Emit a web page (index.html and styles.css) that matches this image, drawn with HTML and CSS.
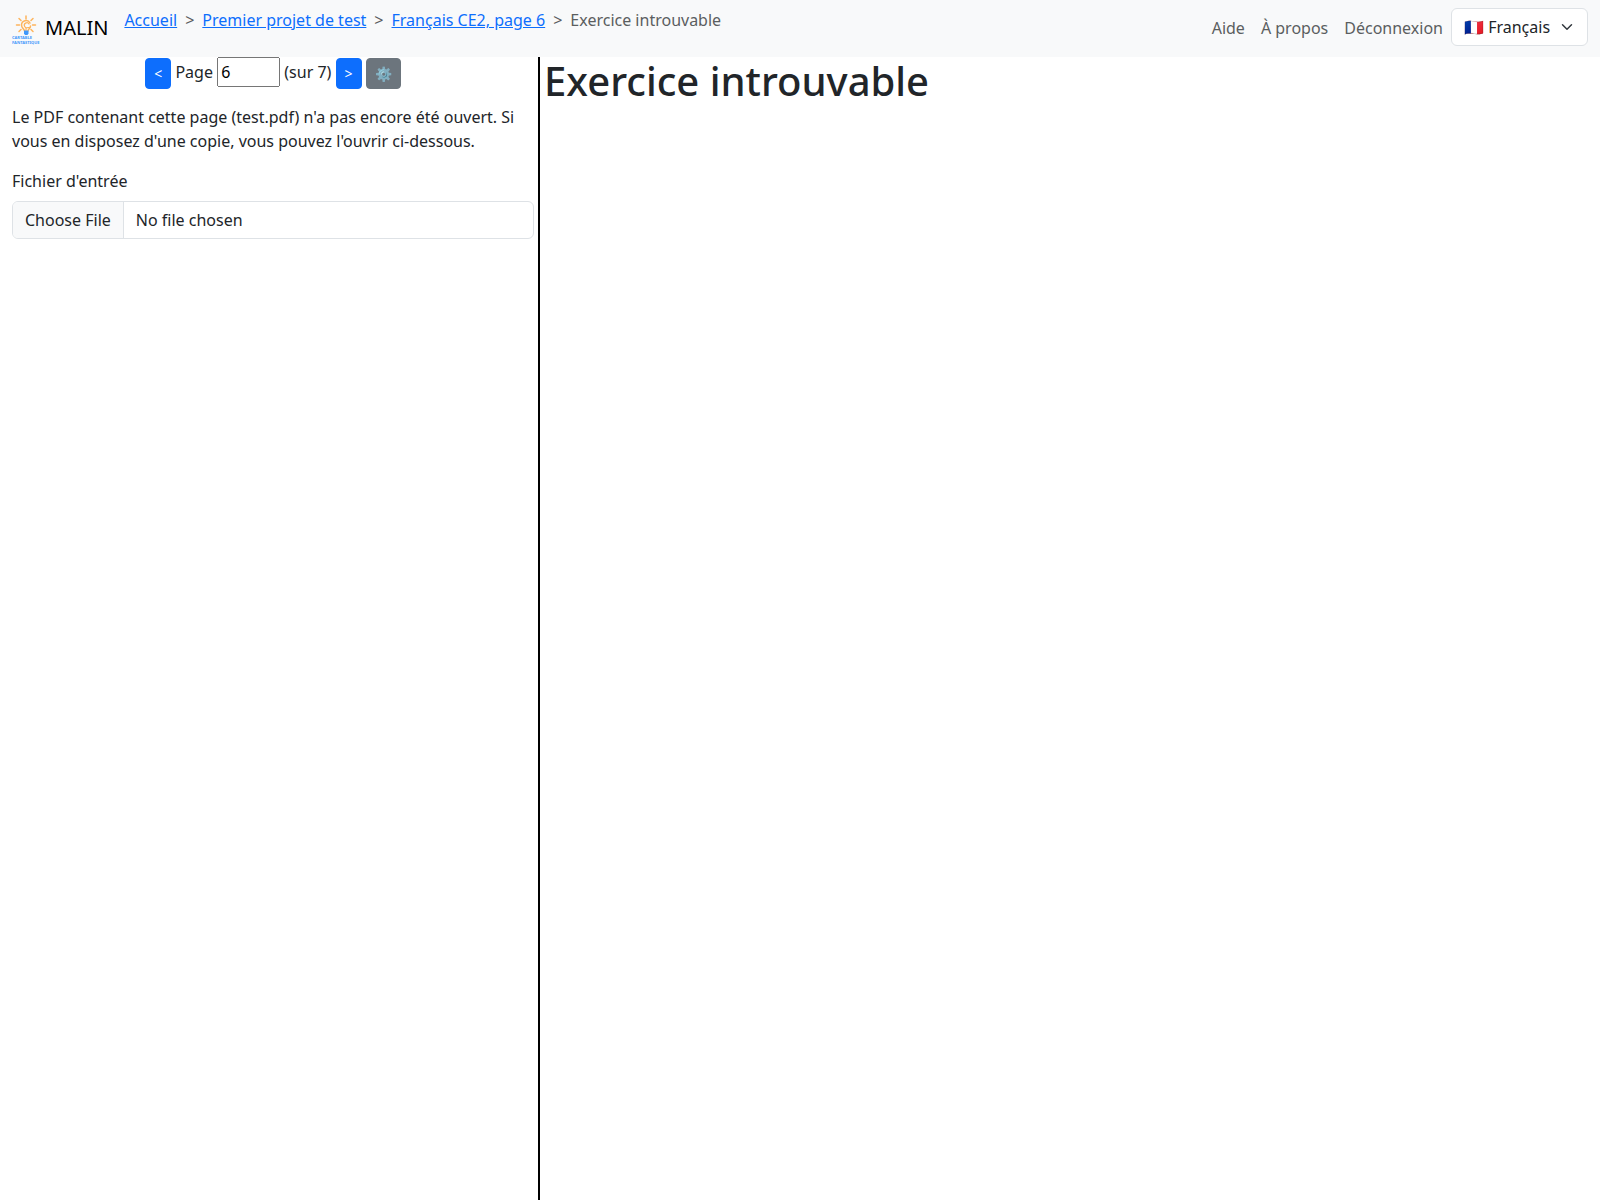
FILE: index.html
```html
<!DOCTYPE html>
<html lang="fr">
<head>
  <meta charset="utf-8">
  <meta name="viewport" content="width=device-width, initial-scale=1">
  <title>MALIN - Exercice introuvable</title>
  <link rel="stylesheet" href="styles.css">
</head>
<body>
  <header class="navbar">
    <a class="brand" href="#">
      <svg class="logo" viewBox="0 0 30 30" aria-hidden="true">
        <g fill="none" stroke="#fdb45c" stroke-width="1.500" stroke-linecap="round">
          <path d="M14 1v3M7 3.500l2 2M21 3.500l-2 2M4.500 10h3M20.500 10h3M7 16.500l2-2M21 16.500l-2-2"/>
          <path d="M12.500 16c0-2-3-2.500-3-6a4.500 4.500 0 0 1 8.500-2M18.500 11c0 2.500-2.500 3-2.500 5" stroke-width="1.500"/>
          <path d="M17 9a2.500 2.500 0 1 0-1 3.500h2M14 13v3" stroke-width="1.200"/>
        </g>
        <path d="M12 15.500h4.500v3l-1 1.500h-2.500l-1-1.500z" fill="#3f98fb"/>
        <g class="logo-text">
          <text x="0" y="24">CARTABLE</text>
          <text x="0" y="29">FANTASTIQUE</text>
        </g>
      </svg>
      <span>MALIN</span>
    </a>
    <nav class="trail" aria-label="Fil d'Ariane">
      <ol class="breadcrumb">
        <li><a href="#">Accueil</a></li>
        <li><a href="#">Premier projet de test</a></li>
        <li><a href="#">Français CE2, page 6</a></li>
        <li aria-current="page">Exercice introuvable</li>
      </ol>
    </nav>
    <nav class="menu" aria-label="Menu">
      <a class="menu-link" href="#">Aide</a>
      <a class="menu-link" href="#">À propos</a>
      <a class="menu-link" href="#">Déconnexion</a>
      <select class="language" aria-label="Langue">
        <option>🇫🇷 Français</option>
      </select>
    </nav>
  </header>
  <main class="columns">
    <section class="pane">
      <div class="pager">
        <button class="btn btn-primary" type="button">&lt;</button>
        <label for="page">Page</label>
        <input class="page-number" id="page" type="number" min="1" max="7" value="6">
        <span>(sur 7)</span>
        <button class="btn btn-primary" type="button">&gt;</button>
        <button class="btn btn-secondary" type="button" aria-label="Réglages">⚙️</button>
      </div>
      <p class="notice">Le PDF contenant cette page (test.pdf) n'a pas encore été ouvert. Si vous en disposez d'une copie, vous pouvez l'ouvrir ci-dessous.</p>
      <label class="file-label" for="file">Fichier d'entrée</label>
      <input class="file" id="file" type="file" accept=".pdf">
    </section>
    <div class="gutter"></div>
    <section class="pane">
      <h1 class="title">Exercice introuvable</h1>
    </section>
  </main>
</body>
</html>
```
FILE: styles.css
```css
*, *::before, *::after { box-sizing: border-box; }

body {
  display: flex;
  flex-direction: column;
  min-height: 100vh;
  margin: 0;
  font-family: "Noto Sans", "Liberation Sans", sans-serif;
  font-size: 16px;
  line-height: 24px;
  color: #212529;
  background: #fff;
}

button, input, select {
  margin: 0;
  font-family: inherit;
  font-size: inherit;
  line-height: inherit;
}

.navbar {
  display: flex;
  align-items: flex-start;
  min-height: 57px;
  padding: 8px 12px;
  background: #f8f9fa;
}

.brand {
  display: flex;
  align-items: center;
  gap: 3px;
  height: 40px;
  margin-right: 16px;
  font-size: 20px;
  color: #000;
  text-decoration: none;
}

.logo {
  width: 30px;
  height: 30px;
  margin-top: 4px;
}

.logo-text {
  font-size: 4px;
  font-weight: 700;
  fill: #3f98fb;
}

.trail { flex: 1; }

.breadcrumb {
  display: flex;
  flex-wrap: wrap;
  margin: 0;
  padding: 0;
  list-style: none;
  color: #5b5e60;
}

.breadcrumb li + li { padding-left: 8px; }

.breadcrumb li + li::before {
  content: ">";
  padding-right: 8px;
}

.breadcrumb a { color: #0d6efd; }

.menu {
  display: flex;
  align-items: flex-start;
}

.menu-link {
  padding: 8px;
  color: #5b5e60;
  text-decoration: none;
}

.language {
  width: 137px;
  height: 38px;
  padding: 6px 36px 6px 12px;
  color: #212529;
  appearance: none;
  border: 1px solid #dee2e6;
  border-radius: 6px;
  background: #fff url("data:image/svg+xml,%3csvg xmlns='http://www.w3.org/2000/svg' viewBox='0 0 16 16'%3e%3cpath fill='none' stroke='%23343a40' stroke-linecap='round' stroke-linejoin='round' stroke-width='2' d='m2 5 6 6 6-6'/%3e%3c/svg%3e") no-repeat right 12px center / 16px 12px;
}

.columns {
  display: grid;
  flex: 1;
  grid-template-columns: minmax(0, 1fr) 2px minmax(0, 2fr);
  padding: 0 8px 0 12px;
}

.pane { padding-right: 4px; }

.gutter { background: #000; }

.gutter + .pane { padding-left: 4px; }

.pager {
  margin-bottom: 16px;
  text-align: center;
}

.btn {
  padding: 4px 8px;
  font-size: 14px;
  line-height: 21px;
  color: #fff;
  vertical-align: middle;
  border: 1px solid;
  border-radius: 4px;
}

.btn-primary {
  background: #0d6efd;
  border-color: #0d6efd;
}

.btn-secondary {
  background: #6c757d;
  border-color: #6c757d;
}

.page-number { width: 63px; }

.notice { margin: 0 0 16px; }

.file-label {
  display: inline-block;
  margin-bottom: 8px;
}

.file {
  display: block;
  width: 100%;
  padding: 6px 12px;
  overflow: hidden;
  color: #212529;
  border: 1px solid #dee2e6;
  border-radius: 6px;
}

.file::file-selector-button {
  margin: -6px 12px -6px -12px;
  padding: 6px 12px;
  font: inherit;
  color: #212529;
  background: #f8f9fa;
  border: 0 solid #dee2e6;
  border-right-width: 1px;
}

.title {
  margin: 0 0 8px;
  font-size: 40px;
  font-weight: 500;
  line-height: 48px;
}
```
